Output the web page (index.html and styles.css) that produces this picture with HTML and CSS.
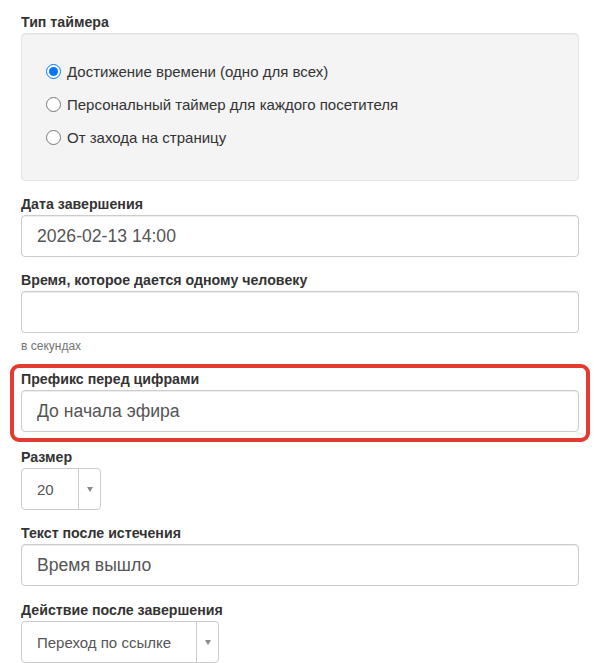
FILE: index.html
```html
<!DOCTYPE html>
<html lang="ru">
<head>
<meta charset="utf-8">
<title>Настройки таймера</title>
<link rel="stylesheet" href="styles.css">
</head>
<body>
<form class="form">
  <div class="group">
    <label class="label">Тип таймера</label>
    <div class="well">
      <label class="radio-row"><input type="radio" name="type" checked><span>Достижение времени (одно для всех)</span></label>
      <label class="radio-row"><input type="radio" name="type"><span>Персональный таймер для каждого посетителя</span></label>
      <label class="radio-row"><input type="radio" name="type"><span>От захода на страницу</span></label>
    </div>
  </div>

  <div class="group">
    <label class="label">Дата завершения</label>
    <input class="input" type="text" value="2026-02-13 14:00">
  </div>

  <div class="group group-help">
    <label class="label">Время, которое дается одному человеку</label>
    <input class="input" type="text" value="">
    <div class="help">в секундах</div>
  </div>

  <div class="group highlight">
    <label class="label">Префикс перед цифрами</label>
    <input class="input" type="text" value="До начала эфира">
  </div>

  <div class="group">
    <label class="label">Размер</label>
    <div class="select select-size">
      <span class="select-value">20</span>
      <span class="select-caret"><span class="triangle"></span></span>
    </div>
  </div>

  <div class="group group-text">
    <label class="label">Текст после истечения</label>
    <input class="input" type="text" value="Время вышло">
  </div>

  <div class="group">
    <label class="label">Действие после завершения</label>
    <div class="select select-action">
      <span class="select-value">Переход по ссылке</span>
      <span class="select-caret"><span class="triangle"></span></span>
    </div>
  </div>
</form>
</body>
</html>
```

FILE: styles.css
```css
html, body {
  margin: 0;
  padding: 0;
  background: #fff;
}

body {
  font-family: "Liberation Sans", Arial, sans-serif;
  color: #333;
  overflow: hidden;
}

.form {
  padding: 12px 16px 0 21px;
  width: 558px;
}

.group {
  margin-bottom: 13px;
}

.group-help {
  margin-bottom: 9px;
}

.group-text {
  margin-bottom: 14px;
}

.label {
  display: block;
  font-size: 14.2px;
  font-weight: bold;
  line-height: 20px;
  margin-bottom: 1px;
  color: #333;
}

.well {
  box-sizing: border-box;
  height: 148px;
  background: #f4f4f4;
  border: 1px solid #e3e3e3;
  border-radius: 4px;
  padding: 21px 0 0 24px;
  box-shadow: inset 0 1px 1px rgba(0, 0, 0, 0.03);
}

.radio-row {
  display: flex;
  align-items: center;
  height: 33px;
  font-size: 15px;
  color: #333;
}

.radio-row input {
  width: 15px;
  height: 15px;
  margin: 0 6px 0 0;
  flex: none;
}

.input {
  display: block;
  box-sizing: border-box;
  width: 100%;
  height: 42px;
  margin: 0;
  padding: 0 15px;
  font-family: "Liberation Sans", Arial, sans-serif;
  font-size: 17.6px;
  color: #555;
  background: #fff;
  border: 1px solid #ccc;
  border-radius: 4px;
  box-shadow: inset 0 1px 1px rgba(0, 0, 0, 0.075);
  outline: none;
}

.help {
  margin-top: 5px;
  font-size: 12px;
  line-height: 17px;
  color: #737373;
}

.highlight {
  margin: 0 -11px 5px;
  padding: 1px 7px 6px;
  border: 4px solid #e43b30;
  border-radius: 9px;
}

.select {
  box-sizing: border-box;
  display: flex;
  height: 42px;
  border: 1px solid #ccc;
  border-radius: 4px;
  background: #fff;
  font-size: 15px;
  color: #555;
}

.select-size {
  width: 80px;
}

.select-action {
  width: 198px;
}

.select-value {
  flex: 1;
  display: flex;
  align-items: center;
  padding-left: 15px;
}

.select-caret {
  flex: none;
  width: 21px;
  border-left: 1px solid #ccc;
  display: flex;
  align-items: center;
  justify-content: center;
}

.triangle {
  width: 0;
  height: 0;
  border-left: 3.5px solid transparent;
  border-right: 3.5px solid transparent;
  border-top: 5px solid #8a8a8a;
}
```
